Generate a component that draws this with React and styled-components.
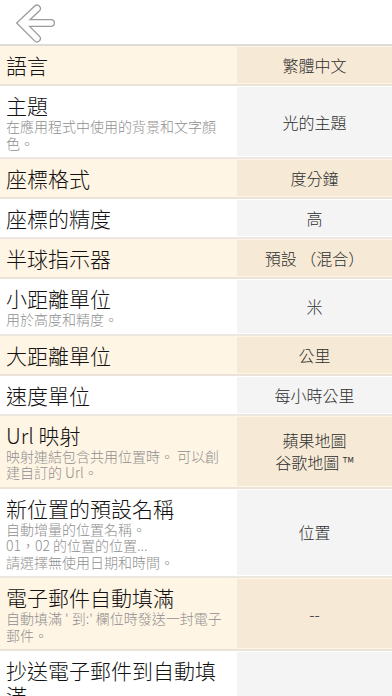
import React from "react";
import styled, { createGlobalStyle } from "styled-components";

const Global = createGlobalStyle`
  html, body {
    margin: 0;
    padding: 0;
    background: #ffffff;
    overflow: hidden;
  }
  body {
    font-family: "Noto Sans CJK TC", "Noto Sans", sans-serif;
    -webkit-font-smoothing: antialiased;
  }
`;

const Page = styled.div`
  width: 392px;
  display: flex;
  flex-direction: column;
`;

const Header = styled.header`
  height: 44px;
  display: flex;
  align-items: center;
  background: #ffffff;
  border-bottom: 2px solid #dedbd8;
`;

const BackButton = styled.button`
  border: none;
  background: transparent;
  padding: 0;
  width: 60px;
  height: 44px;
  display: flex;
  align-items: center;
  cursor: pointer;
`;

const List = styled.div`
  display: flex;
  flex-direction: column;
`;

const Row = styled.div`
  display: grid;
  grid-template-columns: 237px 1fr;
  background: ${(p) => (p.$alt ? "#fff5e4" : "#ffffff")};
  border-bottom: 2px solid ${(p) => (p.$alt ? "#ebe3d8" : "#ece7e1")};
`;

const Label = styled.div`
  display: flex;
  flex-direction: column;
  padding: 7px 4px 6px 6px;
  min-width: 0;
`;

const Title = styled.div`
  font-family: "Noto Sans CJK TC", sans-serif;
  font-weight: 300;
  font-size: 21px;
  line-height: 25px;
  color: #121212;
`;

const Desc = styled.div`
  font-family: "Noto Sans CJK TC", sans-serif;
  font-weight: 300;
  font-size: 14px;
  line-height: 16.5px;
  color: #8f8f8f;
  white-space: pre;
`;

const Value = styled.div`
  margin: 1px 0;
  display: flex;
  align-items: center;
  justify-content: center;
  text-align: center;
  background: ${(p) => (p.$alt ? "#f6ead7" : "#f4f4f4")};
  font-family: "Noto Sans CJK TC", sans-serif;
  font-weight: 300;
  font-size: 16px;
  line-height: 22px;
  color: #2e2e2e;
  white-space: pre-line;
  padding: 0 8px;
`;

const ARROW = "M51 23 H22 M37 8.5 L21.5 23 L37 38.5";

const BackArrow = () => (
  <svg width="60" height="44" viewBox="0 0 60 44" aria-hidden="true">
    <g fill="none" strokeLinejoin="miter" strokeMiterlimit="4">
      <path d={ARROW} stroke="#9b9b9b" strokeWidth="8" strokeLinecap="round" />
      <path d={ARROW} stroke="#ffffff" strokeWidth="5.4" strokeLinecap="round" />
    </g>
  </svg>
);

const settings = [
  { title: "語言", value: "繁體中文" },
  { title: "主題", desc: "在應用程式中使用的背景和文字顏\n色。", value: "光的主題" },
  { title: "座標格式", value: "度分鐘" },
  { title: "座標的精度", value: "高" },
  { title: "半球指示器", value: "預設 （混合）" },
  { title: "小距離單位", desc: "用於高度和精度。", value: "米" },
  { title: "大距離單位", value: "公里" },
  { title: "速度單位", value: "每小時公里" },
  {
    title: "Url 映射",
    desc: "映射連結包含共用位置時。 可以創\n建自訂的 Url。",
    value: "蘋果地圖\n谷歌地圖 ™",
  },
  {
    title: "新位置的預設名稱",
    desc: "自動增量的位置名稱。\n01，02 的位置的位置...\n請選擇無使用日期和時間。",
    value: "位置",
  },
  {
    title: "電子郵件自動填滿",
    desc: "自動填滿 ' 到:' 欄位時發送一封電子\n郵件。",
    value: "--",
  },
  { title: "抄送電子郵件到自動填滿", value: "" },
];

export default function App() {
  return (
    <>
      <Global />
      <Page>
        <Header>
          <BackButton aria-label="返回">
            <BackArrow />
          </BackButton>
        </Header>
        <List>
          {settings.map((s, i) => {
            const alt = i % 2 === 0;
            return (
              <Row key={s.title} $alt={alt}>
                <Label>
                  <Title>{s.title}</Title>
                  {s.desc && <Desc>{s.desc}</Desc>}
                </Label>
                <Value $alt={alt}>{s.value}</Value>
              </Row>
            );
          })}
        </List>
      </Page>
    </>
  );
}
